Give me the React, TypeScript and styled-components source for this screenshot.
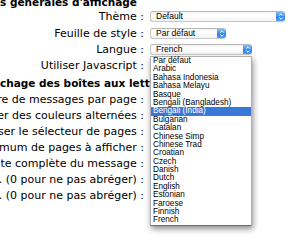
import React from 'react';
import styled, { createGlobalStyle } from 'styled-components';

const GlobalStyle = createGlobalStyle`
  html, body {
    margin: 0;
    padding: 0;
    background: #fff;
  }
  body {
    width: 300px;
    height: 241px;
    overflow: hidden;
    font-family: "DejaVu Sans", "Liberation Sans", sans-serif;
    color: #000;
  }
`;

const Page = styled.div`
  position: relative;
  width: 300px;
  height: 241px;
  overflow: hidden;
`;

const Form = styled.div`
  display: grid;
  grid-template-columns: 144px 1fr;
  column-gap: 6px;
  margin-top: -5px;
`;

const SectionTitle = styled.h3<{ $h: number }>`
  grid-column: 1 / -1;
  display: flex;
  align-items: center;
  height: ${ props => props.$h }px;
  margin: 0;
  font-size: 10.5px;
  font-weight: bold;
  white-space: nowrap;
  overflow: hidden;
`;

const Label = styled.div<{ $h: number }>`
  display: flex;
  justify-content: flex-end;
  align-items: center;
  height: ${ props => props.$h }px;
  font-size: 11px;
  white-space: nowrap;
  overflow: hidden;
`;

const Field = styled.div`
  display: flex;
  align-items: center;
`;

const Select = styled.div<{ $w: number }>`
  display: flex;
  align-items: center;
  box-sizing: border-box;
  width: ${ props => props.$w }px;
  height: 11px;
  padding-left: 5px;
  border: 1px solid #c8c8c8;
  border-top-color: #b8b8b8;
  border-right: none;
  border-radius: 3px;
  background: linear-gradient(#f4f4f4, #ffffff 40%, #f2f2f2);
  font-family: "Liberation Sans", Arial, sans-serif;
  font-size: 8.5px;
  line-height: 9px;
  overflow: hidden;
`;

const SelectButton = styled.span`
  display: flex;
  align-items: center;
  justify-content: center;
  width: 9px;
  height: 11px;
  margin: -1px 0 -1px auto;
  border-radius: 0 3px 3px 0;
  background: linear-gradient(#8cc5fb, #3a8ff4 50%, #2a7fee 55%, #59a9fa);
`;

const Checkbox = styled.span`
  display: block;
  width: 9px;
  height: 9px;
  border: 1px solid #aaa;
  border-radius: 2px;
  background: #fff;
`;

const Dropdown = styled.ul`
  position: absolute;
  top: 56px;
  left: 150px;
  width: 102px;
  box-sizing: border-box;
  margin: 0;
  padding: 0;
  list-style: none;
  border: 1px solid #b0b0b0;
  border-bottom-color: #6e6e6e;
  background: #fff;
  box-shadow: 1px 3px 6px rgba(0, 0, 0, 0.45);
  font-family: "Liberation Sans", Arial, sans-serif;
  font-size: 8.2px;
`;

const Option = styled.li<{ $active?: boolean }>`
  height: 8.4px;
  line-height: 8.4px;
  padding-left: 2px;
  white-space: nowrap;
  background: ${ props => (props.$active ? '#3a78d8' : 'transparent') };
  color: ${ props => (props.$active ? '#fff' : '#000') };
`;

const Arrows = () => (
  <svg width="6" height="9" viewBox="0 0 6 9">
    <path d="M1.2 3.6 L3 1.8 L4.8 3.6 M1.2 5.4 L3 7.2 L4.8 5.4" fill="none" stroke="#fff" strokeWidth="1" />
  </svg>
);

const languages = [
  'Par défaut', 'Arabic', 'Bahasa Indonesia', 'Bahasa Melayu', 'Basque',
  'Bengali (Bangladesh)', 'Bengali (India)', 'Bulgarian', 'Catalan',
  'Chinese Simp', 'Chinese Trad', 'Croatian', 'Czech', 'Danish', 'Dutch',
  'English', 'Estonian', 'Faroese', 'Finnish', 'French',
];

const mailboxRows = [
  're de messages par page :',
  'er des couleurs alternées :',
  'ser le sélecteur de pages :',
  'mum de pages à afficher :',
  'te complète du message :',
  '. (0 pour ne pas abréger) :',
  '. (0 pour ne pas abréger) :',
];

const App: React.FC = () => (
  <Page>
    <GlobalStyle />
    <Form>
      <SectionTitle $h={13}>s générales d'affichage</SectionTitle>

      <Label $h={17}>Thème :</Label>
      <Field>
        <Select $w={135}>Default<SelectButton><Arrows /></SelectButton></Select>
      </Field>

      <Label $h={16}>Feuille de style :</Label>
      <Field>
        <Select $w={76}>Par défaut<SelectButton><Arrows /></SelectButton></Select>
      </Field>

      <Label $h={16}>Langue :</Label>
      <Field>
        <Select $w={102}>French<SelectButton><Arrows /></SelectButton></Select>
      </Field>

      <Label $h={17}>Utiliser Javascript :</Label>
      <Field><Checkbox /></Field>

      <SectionTitle $h={17}>chage des boîtes aux lettres</SectionTitle>

      {mailboxRows.map((text, i) => (
        <React.Fragment key={i}>
          <Label $h={16}>{text}</Label>
          <Field />
        </React.Fragment>
      ))}
    </Form>

    <Dropdown>
      {languages.map(lang => (
        <Option key={lang} $active={lang === 'Bengali (India)'}>{lang}</Option>
      ))}
    </Dropdown>
  </Page>
);

export default App;
